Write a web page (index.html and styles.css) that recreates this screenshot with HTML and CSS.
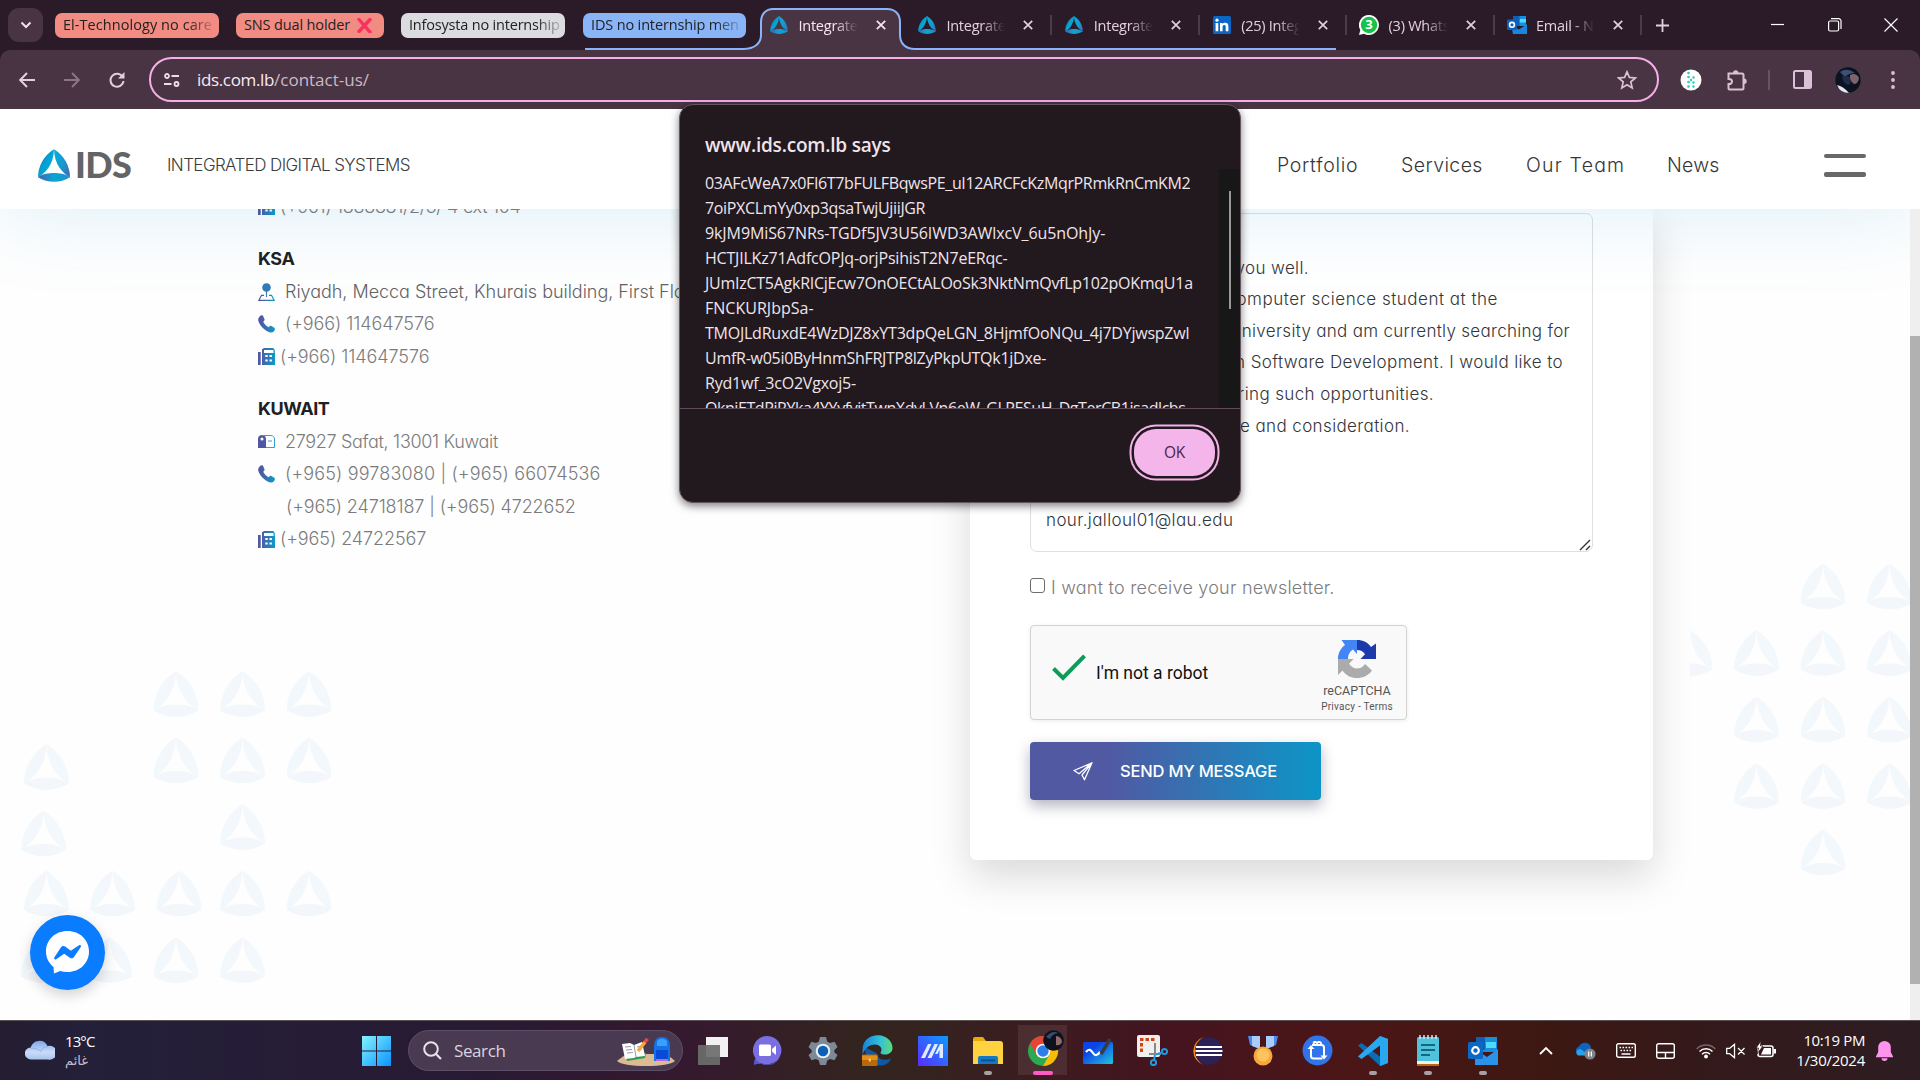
FILE: index.html
```html
<!DOCTYPE html>
<html lang="en">
<head>
<meta charset="utf-8">
<title>Integrated Digital Systems - Contact us</title>
<link rel="stylesheet" href="styles.css">
</head>
<body>
<svg class="defs" width="0" height="0" aria-hidden="true">
  <defs>
    <linearGradient id="gBrand" x1="0" x2="1"><stop offset="0.15" stop-color="#5157a3"/><stop offset="1" stop-color="#0b9bc9"/></linearGradient>
    <linearGradient id="gPetal" x1="0" x2="1" y1="0" y2="1"><stop offset="0" stop-color="#3c5fae"/><stop offset=".5" stop-color="#00a5d3"/><stop offset="1" stop-color="#00b0dc"/></linearGradient>
    <linearGradient id="gPetal2" x1="0" x2="1" y1="0" y2="1"><stop offset="0" stop-color="#00b0dc"/><stop offset=".55" stop-color="#1898cf"/><stop offset="1" stop-color="#4a62b0"/></linearGradient>
    <linearGradient id="gLens" x1="0" x2="1"><stop offset="0" stop-color="#4a5fb0"/><stop offset=".5" stop-color="#0aa5d4"/><stop offset="1" stop-color="#1f8fc9"/></linearGradient>
    <linearGradient id="gWin" x1="0" x2="1" y1="0" y2="1"><stop offset="0" stop-color="#84f2ff"/><stop offset="1" stop-color="#0a93ff"/></linearGradient>
    <linearGradient id="gFaintL" x1="0" x2="1"><stop offset="0" stop-color="#f1f9fd"/><stop offset="1" stop-color="#f4f6fa"/></linearGradient>
    <symbol id="ids" viewBox="0 0 45 46">
      <path fill="url(#gPetal)" d="M22.5 0C8 9 0 24 0 39.500C10 34 22 22 22.500 0Z"/>
      <path fill="url(#gPetal2)" d="M22.500 0C37 9 45 24 45 39.500C35 34 23 22 22.500 0Z"/>
      <path fill="url(#gLens)" d="M0 39.500C7 34.500 15 33.500 22.500 33.500S38 34.500 45 39.500C31 48 14 48 0 39.500Z"/>
    </symbol>
    <symbol id="mark" viewBox="0 0 45 46">
      <path fill="url(#gFaintL)" d="M22.5 0C8 9 0 24 0 39.500C10 34 22 22 22.500 0Z"/>
      <path fill="#f3f8fc" d="M22.500 0C37 9 45 24 45 39.500C35 34 23 22 22.500 0Z"/>
      <path fill="#f3f7fb" d="M0 39.500C7 34.500 15 33.500 22.500 33.500S38 34.500 45 39.500C31 48 14 48 0 39.500Z"/>
    </symbol>
    <symbol id="x" viewBox="0 0 10 10"><path d="M.8.8l8.400 8.400M9.200.8L.8 9.200" stroke="currentColor" stroke-width="1.700" fill="none"/></symbol>
    <symbol id="phone" viewBox="0 0 17 18"><path fill="url(#gBrand)" d="M1 2.500C2 .5 4-.4 5 .7L6.500 4.200C6.800 5 6.500 5.500 5.200 6.800C6.500 9.500 8.300 11.200 10.800 12.300C12 10.800 12.700 10.600 13.400 11L16.300 12.800C17.300 13.500 17 15 15.800 16.400C14.500 17.800 13 17.800 11 17C6 15 1.500 10.300.2 5.500C0 4.300.3 3.300 1 2.500Z"/></symbol>
    <symbol id="fax" viewBox="0 0 17 17"><path fill="url(#gBrand)" fill-rule="evenodd" d="M0 4h2.700v13H0zM4 1h1.300V0h10l1.500 2v3h-1.300V2H6v3H17v12H4zM7.300 7v2h2.400V7zm4.200 0v2h2.400V7zM7.300 11.500v2h2.400v-2zm4.200 0v2h2.400v-2z"/></symbol>
    <symbol id="pin" viewBox="0 0 17 18"><circle cx="8.500" cy="4.500" r="4.300" fill="#2f7cb8"/><path fill="none" stroke="url(#gBrand)" stroke-width="1.200" d="M6 12.300H3.500L.9 17.300h15.200L13.500 12.300H11"/><path fill="#4a78b4" d="M7.900 8h1.200v6H7.900z"/></symbol>
    <symbol id="mailbox" viewBox="0 0 17 13"><path fill="#5157a3" d="M0 4C0 1.500 1.800 0 4 0S8 1.500 8 4v9H0z"/><path fill="none" stroke="#35a0cc" d="M4 .5h9c2 0 3.500 1.500 3.500 3.500v8.500H8M10 6h4"/><circle cx="4" cy="4" r="1.500" fill="#fff"/></symbol>
  </defs>
</svg>

<div class="tabstrip">
  <svg class="tab-outline" width="760" height="50" viewBox="0 0 760 50"><path fill="#493443" d="M158 50c13 0 18-7 18-14V22c0-8 5-13 12-13h114c8 0 13 5 13 13v14c0 8 5 14 15 14z"/><path fill="none" stroke="#8ab4f8" stroke-width="2" d="M0 49h158c12 0 18-6 18-14V22c0-8 5-13 12-13h114c8 0 13 5 13 13v13c0 8 5 14 15 14h421"/></svg>
  <div class="tabsearch"><svg width="12" height="8" viewBox="0 0 12 8"><path d="M1.500 1.500L6 6l4.500-4.500" fill="none" stroke="#f3dfee" stroke-width="2"/></svg></div>
  <div class="group red g1"><span class="fade">El-Technology no care</span></div>
  <div class="group red g2"><span>SNS dual holder</span><svg width="15" height="15" viewBox="0 0 15 15"><path d="M2 1.500L13 14M13 1.500L2 13.500" stroke="#f8315e" stroke-width="3.400" stroke-linecap="round"/></svg></div>
  <div class="group gray g3"><span class="fade">Infosysta no internship</span></div>
  <div class="group blue g4"><span class="fade">IDS no internship men</span></div>
  <div class="tabs">
    <div class="tab on"><svg class="fav" width="18" height="18"><use href="#ids"/></svg><span class="ttl">Integrated</span><svg class="cls" width="10" height="10"><use href="#x"/></svg></div>
    <div class="tab sep"><svg class="fav" width="18" height="18"><use href="#ids"/></svg><span class="ttl">Integrated</span><svg class="cls" width="10" height="10"><use href="#x"/></svg></div>
    <div class="tab sep"><svg class="fav" width="18" height="18"><use href="#ids"/></svg><span class="ttl">Integrated</span><svg class="cls" width="10" height="10"><use href="#x"/></svg></div>
    <div class="tab sep"><svg class="fav" width="18" height="18" viewBox="0 0 18 18"><rect width="18" height="18" rx="1.500" fill="#0a66c2"/><path fill="#fff" d="M2.600 7h2.700v8.300H2.600zM7 7h2.500v1.200c.5-.9 1.400-1.400 2.700-1.400 2.600 0 3.200 1.600 3.200 4v4.500h-2.700v-4c0-1.200-.1-2.200-1.400-2.200S9.600 10 9.600 11.200v4.100H7z"/><circle cx="4" cy="4.200" r="1.600" fill="#fff"/></svg><span class="ttl">(25) Integ</span><svg class="cls" width="10" height="10"><use href="#x"/></svg></div>
    <div class="tab sep"><span class="wa"><svg width="20" height="20" viewBox="0 0 20 20"><path fill="#fff" d="M10 0a10 10 0 1 1-5 18.700L0 20l1.300-5A10 10 0 0 1 10 0z"/><circle cx="10" cy="10" r="8.200" fill="#17c14b"/></svg><b>3</b></span><span class="ttl">(3) Whats</span><svg class="cls" width="10" height="10"><use href="#x"/></svg></div>
    <div class="tab sep"><svg class="fav ol" width="20" height="18" viewBox="0 0 20 18"><path fill="#1490df" d="M6 0h13v10H6z"/><path fill="#50d9ff" d="M12.500 3H19v3.500h-6.500z"/><path fill="#0f5fb5" d="M6 0h6.500v10H6z"/><path fill="#1b86dd" d="M4 9l8 4.500L20 8v10H6z"/><rect y="3.500" width="10" height="10.500" rx="1" fill="#0a62c0"/><circle cx="5" cy="8.800" r="2.400" fill="none" stroke="#fff" stroke-width="1.600"/></svg><span class="ttl">Email - No</span><svg class="cls" width="10" height="10"><use href="#x"/></svg></div>
  </div>
  <svg class="plus" width="13" height="13" viewBox="0 0 13 13"><path d="M6.500 0v13M0 6.500h13" stroke="#e4cfe0" stroke-width="1.800"/></svg>
  <div class="wincontrols">
    <svg width="14" height="14" viewBox="0 0 14 14"><path d="M0 6.500h13" stroke="#fff" stroke-width="1.200"/></svg>
    <svg width="14" height="14" viewBox="0 0 14 14"><rect x=".6" y="3" width="10" height="10" rx="1.500" fill="none" stroke="#fff" stroke-width="1.200"/><path d="M3 .7h7.500a2.500 2.500 0 0 1 2.500 2.500V11" fill="none" stroke="#fff" stroke-width="1.200"/></svg>
    <svg width="14" height="14" viewBox="0 0 14 14"><path d="M.5.5l13 13M13.500.5l-13 13" stroke="#fff" stroke-width="1.200"/></svg>
  </div>
</div>

<div class="toolbar-wrap"><div class="toolbar">
  <div class="nav">
    <svg width="16" height="16" viewBox="0 0 16 16"><path d="M8 1L1.200 8 8 15M1.500 8H16" fill="none" stroke="#e4cfe0" stroke-width="2"/></svg>
    <svg width="16" height="16" viewBox="0 0 16 16"><path d="M8 1l6.800 7L8 15M14.500 8H0" fill="none" stroke="#8c7585" stroke-width="2"/></svg>
    <svg width="16" height="16" viewBox="0 0 16 16"><path d="M13.700 5A6.500 6.500 0 1 0 14.500 9" fill="none" stroke="#e4cfe0" stroke-width="2"/><path d="M15.500 0v6.500H9z" fill="#e4cfe0"/></svg>
  </div>
  <div class="omnibox">
    <svg width="16" height="14" viewBox="0 0 16 14"><g fill="none" stroke="#eedcea" stroke-width="1.800"><circle cx="3" cy="3" r="2"/><path d="M7.500 3H15M0 11h7.500"/><circle cx="12.500" cy="11" r="2"/></g></svg>
    <p class="url"><span>ids.com.lb</span>/contact-us/</p>
    <svg class="star" width="20" height="20" viewBox="0 0 20 20"><path d="M10 1.800l2.400 5.600 6 .5-4.600 4 1.400 6L10 14.700 4.800 17.900l1.400-6-4.600-4 6-.5z" fill="none" stroke="#d9c3d4" stroke-width="1.700"/></svg>
  </div>
  <div class="ext">
    <svg width="22" height="22" viewBox="0 0 22 22"><circle cx="11" cy="11" r="10.500" fill="#fff"/><g fill="#2fc9b5"><circle cx="8.500" cy="4" r="1.300"/><circle cx="8.500" cy="8" r="1.300"/><circle cx="8.500" cy="13" r="1.300"/><circle cx="8.500" cy="17.500" r="1.300"/><circle cx="13.500" cy="8.500" r="1.200"/><circle cx="11" cy="11" r="1.200"/><circle cx="13.500" cy="13.500" r="1.200"/><circle cx="13.500" cy="17.500" r="1.200"/></g></svg>
    <svg width="22" height="22" viewBox="0 0 22 22"><path d="M2.500 4.500H16a1.500 1.500 0 0 1 1.500 1.500v13.500a1 1 0 0 1-1 1H3.500a1 1 0 0 1-1-1V15c2.500.2 3.500-1 3.500-2.500S5 9.800 2.500 10z" fill="none" stroke="#dcbfd8" stroke-width="2"/><path d="M7 4a2.700 2.700 0 0 1 5.400 0zM18 9.500a2.700 2.700 0 0 1 0 5.400z" fill="#dcbfd8"/></svg>
    <i></i>
    <svg width="19" height="19" viewBox="0 0 19 19"><rect x="1" y="1" width="17" height="17" rx="1.500" fill="none" stroke="#dcbfd8" stroke-width="2"/><path d="M11 1h7v17h-7z" fill="#dcbfd8"/></svg>
    <svg width="26" height="26" viewBox="0 0 26 26"><circle cx="13" cy="13" r="12.700" fill="#0c1220"/><path d="M2 18q6 1 12 8Q5 26 2 18z" fill="#dfe6f2"/><path d="M5 5q7-5 15 1-6 0-10 4z" fill="#3c5274"/><path d="M15 8q6-3 9 3-1 6-5 6-5-3-4-9z" fill="#7d6468"/><path d="M7 10q5-3 8 1 2 6-2 7-5-2-6-8z" fill="#1f2c49"/></svg>
    <svg width="4" height="18" viewBox="0 0 4 18"><g fill="#dcbfd8"><circle cx="2" cy="2" r="1.900"/><circle cx="2" cy="9" r="1.900"/><circle cx="2" cy="16" r="1.900"/></g></svg>
  </div>
</div></div>

<div class="page">
  <header class="site-header">
    <svg class="logo" width="32" height="33"><use href="#ids"/></svg>
    <span class="brand">IDS</span>
    <span class="tagline">INTEGRATED DIGITAL SYSTEMS</span>
    <nav><a class="n1">Portfolio</a><a class="n2">Services</a><a class="n3">Our Team</a><a class="n4">News</a></nav>
    <div class="burger"><i></i><i></i></div>
  </header>
  <main>
    <svg class="deco" width="1910" height="811" viewBox="0 209 1910 811">
      <g>
        <use href="#mark" x="153.500" y="671" width="45" height="46"/><use href="#mark" x="220" y="671" width="45" height="46"/><use href="#mark" x="286.500" y="671" width="45" height="46"/>
        <use href="#mark" x="24" y="744" width="45" height="46"/><use href="#mark" x="153.500" y="737.500" width="45" height="46"/><use href="#mark" x="220" y="737.500" width="45" height="46"/><use href="#mark" x="286.500" y="737.500" width="45" height="46"/>
        <use href="#mark" x="21" y="810.500" width="45" height="46"/><use href="#mark" x="220" y="804" width="45" height="46"/>
        <use href="#mark" x="24" y="870.500" width="45" height="46"/><use href="#mark" x="90" y="870.500" width="45" height="46"/><use href="#mark" x="156.500" y="870.500" width="45" height="46"/><use href="#mark" x="220" y="870.500" width="45" height="46"/><use href="#mark" x="286.500" y="870.500" width="45" height="46"/>
        <use href="#mark" x="21" y="937" width="45" height="46"/><use href="#mark" x="87" y="937" width="45" height="46"/><use href="#mark" x="153.500" y="937" width="45" height="46"/><use href="#mark" x="220" y="937" width="45" height="46"/>
      </g>
      <clipPath id="rc"><path d="M1690 500h220v400h-220z"/></clipPath>
      <g clip-path="url(#rc)">
        <use href="#mark" x="1800.500" y="563.500" width="45" height="46"/><use href="#mark" x="1867" y="563.500" width="45" height="46"/>
        <use href="#mark" x="1667.500" y="630" width="45" height="46"/><use href="#mark" x="1734" y="630" width="45" height="46"/><use href="#mark" x="1800.500" y="630" width="45" height="46"/><use href="#mark" x="1867" y="630" width="45" height="46"/>
        <use href="#mark" x="1734" y="696.500" width="45" height="46"/><use href="#mark" x="1800.500" y="696.500" width="45" height="46"/><use href="#mark" x="1867" y="696.500" width="45" height="46"/>
        <use href="#mark" x="1734" y="763" width="45" height="46"/><use href="#mark" x="1800.500" y="763" width="45" height="46"/><use href="#mark" x="1867" y="763" width="45" height="46"/>
        <use href="#mark" x="1800.500" y="829.500" width="45" height="46"/>
      </g>
    </svg>
    <section class="contacts">
      <div class="office">
        <p class="faxrow"><svg width="17" height="17"><use href="#fax"/></svg><span class="c1">(+961) 1888881/2/3/ 4 ext 104</span></p>
      </div>
      <div class="office">
        <h3>KSA</h3>
        <p class="dark"><svg width="17" height="18"><use href="#pin"/></svg><span class="c2">Riyadh, Mecca Street, Khurais building, First Floor</span></p>
        <p><svg width="17" height="18"><use href="#phone"/></svg><span>(+966) 114647576</span></p>
        <p class="faxrow"><svg width="17" height="17"><use href="#fax"/></svg><span>(+966) 114647576</span></p>
      </div>
      <div class="office">
        <h3>KUWAIT</h3>
        <p><svg width="17" height="13"><use href="#mailbox"/></svg><span class="c3">27927 Safat, 13001 Kuwait</span></p>
        <p><svg width="17" height="18"><use href="#phone"/></svg><span class="c4">(+965) 99783080 | (+965) 66074536</span></p>
        <p class="cont"><span class="c5">(+965) 24718187 | (+965) 4722652</span></p>
        <p class="faxrow"><svg width="17" height="17"><use href="#fax"/></svg><span>(+965) 24722567</span></p>
      </div>
    </section>
    <section class="card">
      <div class="message">
        <p></p>
        <p class="m2">finds you well.</p>
        <p class="m3">a computer science student at the</p>
        <p class="m4">University and am currently searching for</p>
        <p class="m5">in Software Development. I would like to</p>
        <p class="m6">offering such opportunities.</p>
        <p class="m7">time and consideration.</p>
        <p></p>
        <p></p>
        <p>nour.jalloul01@lau.edu</p>
        <svg class="grip" width="12" height="12" viewBox="0 0 12 12"><path d="M1 11L11 1M7 11l4-4" stroke="#333" stroke-width="1.400"/></svg>
      </div>
      <label class="news"><i></i><span>I want to receive your newsletter.</span></label>
      <div class="captcha">
        <svg class="tick" width="34" height="27" viewBox="0 0 34 27"><path d="M1.500 14.500L11 24 32.500 1.800" fill="none" stroke="#0b9d58" stroke-width="4"/></svg>
        <span class="robot">I'm not a robot</span>
        <div class="rc">
          <svg width="38" height="38" viewBox="0 0 38 38"><path fill="#1c3aa9" d="M19 0C25 0 30 2.500 33 7L38 3.500V19H22.500L27 14.300C25.500 11.500 22.500 10 19 10z"/><path fill="#4285f4" d="M19 0v14l-4-4.500C12 11 10 14.500 10 19H0C0 13 2.500 8.500 7 5L3.500 0z"/><path fill="#ababab" d="M0 19h15.500L11 23.800C13 27 16 28.500 19 28.500 22 28.500 25 27 27 24l7 6.500C30.500 35.500 25 38 19 38 13 38 8 35.500 4.500 30.500L0 35z"/></svg>
          <b>reCAPTCHA</b><small>Privacy - Terms</small>
        </div>
      </div>
      <div class="send"><svg width="20" height="19" viewBox="0 0 20 19"><path d="M19 .8L1 8.500l5 3.300L19 .8l-7.500 17L9 13zM9 13L19 .8" fill="none" stroke="#fff" stroke-width="1.300" stroke-linejoin="round"/></svg><span>SEND MY MESSAGE</span></div>
    </section>
  </main>
  <div class="scrollbar"><i></i></div>
  <div class="messenger"><svg width="43" height="43" viewBox="0 0 43 43"><path fill="#fff" d="M21.500 0C9 0 0 9 0 20.500c0 6.500 2.800 11.500 7.500 15.500L8 42.500 14 40c2.400.7 5 1 7.500 1C34 41 43 32 43 20.500S34 0 21.500 0z"/><path fill="#0a7cff" d="M8.300 26.500L15 16.200c1-1.400 2.800-1.700 4.200-.7l5.600 4.200 8.200-5.500c1.200-.8 2.600.4 1.800 1.700L28 26c-1 1.400-2.800 1.700-4.200.7l-5.600-4-8 5.500c-1.200.8-2.700-.4-1.900-1.700z"/></svg></div>
</div>

<div class="dialog">
  <h2>www.ids.com.lb says</h2>
  <div class="dialog-body">
    <div class="token">
      <p class="k1">03AFcWeA7x0FI6T7bFULFBqwsPE_uI12ARCFcKzMqrPRmkRnCmKM2</p>
      <p class="k2">7oiPXCLmYy0xp3qsaTwjUjiiJGR</p>
      <p class="k3">9kJM9MiS67NRs-TGDf5JV3U56IWD3AWlxcV_6u5nOhJy-</p>
      <p class="k4">HCTJILKz71AdfcOPJq-orjPsihisT2N7eERqc-</p>
      <p class="k5">JUmIzCT5AgkRICjEcw7OnOECtALOoSk3NktNmQvfLp102pOKmqU1a</p>
      <p class="k6">FNCKURJbpSa-</p>
      <p class="k7">TMOJLdRuxdE4WzDJZ8xYT3dpQeLGN_8HjmfOoNQu_4j7DYjwspZwl</p>
      <p class="k8">UmfR-w05i0ByHnmShFRJTP8lZyPkpUTQk1jDxe-</p>
      <p class="k9">Ryd1wf_3cO2Vgxoj5-</p>
      <p class="k10">QkniETdPiRYka4YYvfvitTwnXdyLVn6eW_GLPESuH_DgTerCB1isadlcbs</p>
    </div>
    <div class="track"><i></i></div>
  </div>
  <div class="dialog-foot"><div class="ok">OK</div></div>
</div>

<div class="taskbar">
  <div class="weather">
    <svg width="30" height="20" viewBox="0 0 30 20"><defs><linearGradient id="gc" x1="0" x2="0" y1="0" y2="1"><stop offset="0" stop-color="#7fa6ea"/><stop offset=".6" stop-color="#c9dcf7"/><stop offset="1" stop-color="#a9c3ef"/></linearGradient></defs><path fill="url(#gc)" d="M6 19.500a6 6 0 0 1-.3-12A9 9 0 0 1 22.500 6 7 7 0 1 1 23 19.500z"/><path fill="none" stroke="#8eb0ea" d="M6 8.500c4-1 8 1 9.500 3 1.500-3 4-5 7.500-5"/></svg>
    <div><span>13°C</span><span class="ar">غائم</span></div>
  </div>
  <svg class="start" width="29" height="30" viewBox="0 0 29 30"><path fill="url(#gWin)" d="M0 0h14v14.400H0zM15 0h14v14.400H15zM0 15.600h14V30H0zM15 15.600h14V30H15z"/></svg>
  <div class="search">
    <svg width="19" height="19" viewBox="0 0 19 19"><circle cx="8" cy="8" r="6.800" fill="none" stroke="#e8e0ea" stroke-width="2"/><path d="M13 13l5 5" stroke="#e8e0ea" stroke-width="2.200"/></svg>
    <span>Search</span>
    <svg class="art" width="58" height="31" viewBox="0 0 58 31"><path fill="#dcbb94" d="M0 26q7-6 12-7h30q11 1 16 7-6 5-29 5T0 26z"/><path fill="#2f9a4c" d="M7 14l3 12 18-3 1-5z"/><path fill="#fff" d="M5 9l8-1 4 2 8-3 3 14-9 1-2 1-9 1z"/><path stroke="#99a" fill="none" d="M17 10l2 12M8 12l6-.5M9 15l6-.5M10 18l6-.5M20 12l4-1M21 15l4-1"/><path stroke="#f7a83a" stroke-width="3.500" d="M21 16l7-9"/><path stroke="#e5484d" stroke-width="3.500" d="M28 7l2.500-3.200"/><path fill="#1473e6" d="M37 12c0-7 3-10 8-10s8 3 8 10v14H37z"/><path fill="#39a0ff" d="M40 6q5-5 10 0v5H40z"/><path fill="#0b49d8" d="M39 15h12v9H39z"/><path fill="#b06be0" d="M39 24h12v2H39z"/></svg>
  </div>
  <div class="apps">
    <div class="app"><svg width="30" height="28" viewBox="0 0 30 28"><path fill="#f1f1f1" d="M8 0h22v20H8z"/><path fill="#6d6d6d" fill-opacity=".92" d="M0 8h22v20H0z"/></svg></div>
    <div class="app"><svg width="29" height="29" viewBox="0 0 29 29"><path fill="#7a6fe0" d="M14.500 0a14.200 14.200 0 1 1-6 27.200L.8 28.500l1.600-6.300A14.300 14.300 0 0 1 14.500 0z"/><path fill="#5a55cc" d="M2 22a14 14 0 0 0 26-4A14 14 0 0 1 8.500 27.200L.8 28.500z"/><rect x="6" y="8.500" width="12" height="11.500" rx="1.500" fill="#fff"/><path fill="#fff" d="M19 13l4-3.500v9.500l-4-3.500z"/></svg></div>
    <div class="app"><svg width="30" height="30" viewBox="0 0 30 30"><path fill="#7d8a96" d="M12 1h6l1.200 4.500L22 7l4.500-1.200 3 5.200-3.200 3.200v2L29.500 19l-3 5.200L22 23l-2.800 1.500L18 29h-6l-1.200-4.500L8 23l-4.500 1.200L.5 19l3.200-2.800v-2L.5 11l3-5.200L8 7l2.800-1.500z"/><circle cx="15" cy="15" r="7.300" fill="#e9eef3"/><circle cx="15" cy="15" r="5.200" fill="#0c61b4"/></svg></div>
    <div class="app"><svg width="31" height="31" viewBox="0 0 31 31"><defs><linearGradient id="ge" x1="0" x2="1"><stop offset="0" stop-color="#1583d8"/><stop offset=".6" stop-color="#35c1d8"/><stop offset="1" stop-color="#5fdc74"/></linearGradient></defs><path fill="#0c59a4" d="M3 12C2 24 12 31 20 30.500c5-.5 8-4 9-7-8 3-14 0-14-5z"/><path fill="url(#ge)" d="M.5 15C.5 6 7 .3 16 .3S31 7 30.500 13.500c-.3 4.500-5 6.500-9 6-3-.5-3.500-1.500-2.500-2.800C21 13 17 9.500 13 9.500 7 9.500 3 13 .5 20z"/><rect y="19.500" width="15.500" height="11.500" rx="1" fill="#b8690c"/><path fill="#e58e19" d="M0 20.500h15.500v4.500H0z"/><path fill="#ffd34d" d="M6.800 23.500h2v3h-2z"/></svg></div>
    <div class="app"><svg width="30" height="30" viewBox="0 0 30 30"><defs><linearGradient id="gm" x1="0" x2="1" y1="1" y2="0"><stop offset="0" stop-color="#5a2bff"/><stop offset="1" stop-color="#0c9bff"/></linearGradient></defs><path fill="url(#gm)" d="M0 0h30v30H0z"/><path fill="#dfe9ff" d="M3 22L10 8h3.500L7 22zM9.500 22l7-14H20l-6.500 14zM22 8h3v14h-3.500v-8l-2 4h-2.500z"/></svg></div>
    <div class="app run"><svg width="30" height="27" viewBox="0 0 30 27"><path fill="#e8a90b" d="M0 2Q0 0 2 0h8l3 4H0z"/><path fill="#ffd23f" d="M0 4h27q3 0 3 3v20H0z"/><path fill="#1378c6" d="M5 27v-6q0-2 2-2h16q2 0 2 2v6z"/><path fill="#0b4f8a" d="M8 22.500h14v1.800H8z"/></svg></div>
    <div class="app run active"><svg width="36" height="37" viewBox="0 0 36 37"><circle cx="15" cy="21" r="15" fill="#2da94f"/><path fill="#ea4335" d="M2 13.500a15 15 0 0 1 26 0H15L8.500 25z"/><path fill="#fbbc05" d="M28 13.500A15 15 0 0 1 15 36l6.500-11.500L22 13.500z"/><circle cx="15" cy="21" r="7.300" fill="#fff"/><circle cx="15" cy="21" r="5.700" fill="#2f7de9"/><circle cx="25.500" cy="10.500" r="10.300" fill="#0e1220"/><path fill="#8f6c68" d="M28 6a6 6 0 0 1 6 6q-2 4-6 3z"/><path fill="#3a4c69" d="M18 7q6-7 12-4-6 1-8 6z"/></svg></div>
    <div class="app"><svg width="30" height="26" viewBox="0 0 30 26"><defs><linearGradient id="gb" x1="0" x2="1" y1="0" y2="1"><stop offset=".3" stop-color="#0b45e8"/><stop offset="1" stop-color="#24c5dd"/></linearGradient></defs><rect y="4" width="30" height="22" rx="1.500" fill="url(#gb)"/><path d="M3 14c3-4 5-2 7 1s4 3 7-1" stroke="#fff" stroke-width="2.200" fill="none"/><path d="M18 16L27 1" stroke="#3a3a40" stroke-width="3.500"/></svg></div>
    <div class="app"><svg width="31" height="31" viewBox="0 0 31 31"><rect width="23" height="22" rx="2" fill="#efefef"/><path d="M4.500 17V4.500H18" fill="none" stroke="#d8420e" stroke-width="3" stroke-dasharray="3.500 2"/><path d="M18 8v12M12 19h12" stroke="#888" stroke-width="2"/><circle cx="27.500" cy="16.500" r="2.600" fill="none" stroke="#1e9be0" stroke-width="2"/><circle cx="16.500" cy="27.500" r="2.600" fill="none" stroke="#1e9be0" stroke-width="2"/><path d="M17 25l1-5M25 17.500l-6 2" stroke="#1e9be0" stroke-width="2"/></svg></div>
    <div class="app"><svg width="30" height="30" viewBox="0 0 30 30"><path fill="#f28a1a" d="M11 1A14.500 14.500 0 0 0 11 29 15.500 15.500 0 0 1 11 1z"/><circle cx="16" cy="15" r="13.700" fill="#2c2255"/><path stroke="#fff" stroke-width="2" d="M3 11h26M2.500 15h27M3 19h26"/></svg></div>
    <div class="app"><svg width="30" height="30" viewBox="0 0 30 30"><path fill="#4e8be8" d="M0 0h10v12l-8-3zM30 0H20v12l8-3z"/><path fill="#a9ccfa" d="M4 0h8v13l-8-3zM18 0h8v10l-8 3z"/><circle cx="15" cy="20" r="9.500" fill="#f7a73a"/><circle cx="15" cy="19" r="6.500" fill="#fdc35c"/></svg></div>
    <div class="app"><svg width="31" height="31" viewBox="0 0 31 31"><circle cx="15.500" cy="15.500" r="15" fill="#2f74e8"/><g fill="none" stroke="#fff" stroke-width="2"><path d="M10 10h9.500q2.500 0 2.500 2.500V21M20.500 23.500h-9Q9 23.500 9 21v-8.500"/><path d="M12 9.500q-1-3 1.500-2.500l1.500 1 1.500-1Q19 6.500 19 9"/></g><path fill="#fff" d="M5.500 14l3.500-4 3.500 4zM18.500 20.500l3.500 4 3.500-4z"/></svg></div>
    <div class="app run"><svg width="30" height="30" viewBox="0 0 30 30"><path fill="#1180c8" d="M22 0l8 3v24l-8 3z"/><path fill="#0b6bb3" d="M0 9.500L3.500 7 22 20.500V30z"/><path fill="#29a8f2" d="M0 20.500L3.500 23 22 9.500V0zM22 0l8 3v24l-8 3z"/></svg></div>
    <div class="app run"><svg width="22" height="31" viewBox="0 0 22 31"><rect y="2" width="22" height="27" rx="1.500" fill="#4fc3dc"/><path fill="#f6f0e6" d="M0 26h22v3H0z"/><path fill="#b9651b" d="M0 29h22v2H0z"/><path stroke="#15667f" stroke-width="2" d="M4 10h14M4 15h14M4 20h9"/><path stroke="#cfeaf2" stroke-width="1.500" d="M3 0v4M7 0v4M11 0v4M15 0v4M19 0v4"/></svg></div>
    <div class="app run"><svg width="30" height="29" viewBox="0 0 30 29"><path fill="#1490df" d="M8 1h21v15H8z"/><path fill="#50d9ff" d="M18 6h10v6H18z"/><path fill="#0f5fb5" d="M8 1h9v13H8z"/><path fill="#2b93e8" d="M7 13l12 8 11-8v16H7z"/><rect y="6" width="15" height="17" rx="1.500" fill="#0d67c5"/><circle cx="7.500" cy="14.500" r="3.300" fill="none" stroke="#fff" stroke-width="2.200"/></svg></div>
  </div>
  <div class="tray">
    <svg class="t1" width="14" height="9" viewBox="0 0 14 9"><path d="M1 8l6-6 6 6" fill="none" stroke="#fff" stroke-width="1.800"/></svg>
    <svg class="t2" width="21" height="18" viewBox="0 0 21 18"><path fill="#0d64c0" d="M4 13a4.500 4.500 0 0 1 0-8.500A6.500 6.500 0 0 1 16 5l-3 8z"/><path fill="#28a2ea" d="M3 13.500c-3-2-1.500-7 2.500-6.500l9 6.500z"/><circle cx="15" cy="12" r="5.600" fill="#808488"/><path stroke="#fff" stroke-width="1.200" d="M13.700 9.500v5M16.300 9.500v5"/></svg>
    <svg class="t3" width="20" height="15" viewBox="0 0 20 15"><rect x=".7" y=".7" width="18.600" height="13.600" rx="1.800" fill="none" stroke="#fff" stroke-width="1.400"/><path stroke="#fff" stroke-width="1.600" stroke-dasharray="1.600 1.400" d="M3.500 4.500h13.500M4.500 7.500h12"/><path stroke="#fff" stroke-width="1.500" d="M5.500 11h9"/></svg>
    <svg class="t4" width="19" height="16" viewBox="0 0 19 16"><rect x=".7" y=".7" width="17.600" height="14.600" rx="2" fill="none" stroke="#fff" stroke-width="1.400"/><path stroke="#fff" stroke-width="1.400" d="M1 9.500h17M9.500 9.500V15"/></svg>
    <svg class="t5" width="20" height="16" viewBox="0 0 20 16"><g fill="none" stroke="#fff" stroke-width="1.500"><path stroke="#7c6462" d="M.7 6A13 13 0 0 1 19.300 6"/><path d="M3.500 8.500a9.200 9.200 0 0 1 13 0M6 11.200a5.700 5.700 0 0 1 8 0"/></g><circle cx="10" cy="13.500" r="1.900" fill="#fff"/></svg>
    <svg class="t6" width="20" height="16" viewBox="0 0 20 16"><g fill="none" stroke="#fff" stroke-width="1.300"><path d="M.7 5.300h3L8.500 1.300v13.400L3.700 10.700h-3zM12 5l6.500 6.500M18.500 5L12 11.500"/></g></svg>
    <svg class="t7" width="20" height="17" viewBox="0 0 20 17"><rect x="2" y="5" width="15" height="10.500" rx="2" fill="none" stroke="#fff" stroke-width="1.500"/><path fill="#fff" d="M8 7h7v6.500H5zM17.500 8H20v4.500h-2.500z"/><path fill="#fff" stroke="#35191a" stroke-width=".8" d="M5 0L0 7h2.500L1 13l6-8H4.500z"/></svg>
    <div class="clock"><span class="tm">10:19 PM</span><span class="dt">1/30/2024</span></div>
    <svg class="bell" width="17" height="20" viewBox="0 0 17 20"><path fill="#ff94ee" d="M8.500 0a6.300 6.300 0 0 1 6.300 6.300v4.700L17 15.500v.8H0v-.8L2.200 11V6.300A6.300 6.300 0 0 1 8.500 0zM5.500 17.300h6a3 2.700 0 0 1-6 0z"/></svg>
  </div>
</div>
</body>
</html>
```
FILE: styles.css
```css
* { box-sizing: border-box; margin: 0; padding: 0; }
body {
  width: 1920px; height: 1080px; overflow: hidden;
  display: flex; flex-direction: column; position: relative;
  font-family: "Open Sans", "Noto Sans", sans-serif;
  background: #fff;
}
svg { display: block; flex: none; }
.defs { position: absolute; }
i { display: block; font-style: normal; }
span, p, a, h2, h3, b, small { white-space: pre; }

/* tab strip */
.tabstrip { height: 50px; flex: none; background: #2b1a28; display: flex; align-items: flex-start; position: relative; padding-left: 8px; }
.tab-outline { position: absolute; left: 585px; top: 0; z-index: 0; }
.tabsearch { width: 35px; height: 34px; margin-top: 8px; border-radius: 11px; background: #493443; display: flex; align-items: center; justify-content: center; }
.group { height: 25px; margin-top: 13px; border-radius: 7px; padding: 0 0 0 8px; font-size: 14.500px; line-height: 23px; color: #222; display: flex; align-items: center; }
.group span { height: 25px; }
.fade { mask-image: linear-gradient(90deg, #000 84%, rgba(0, 0, 0, .2) 100%); }
.red { background: #f28b82; }
.gray { background: #dadce0; }
.blue { background: #8ab4f8; }
.g1 { width: 164px; margin-left: 12px; letter-spacing: .06px; }
.g2 { width: 148px; margin-left: 17px; letter-spacing: -.14px; gap: 7px; }
.g3 { width: 164px; margin-left: 17px; letter-spacing: -.19px; }
.g4 { width: 163px; margin-left: 18px; letter-spacing: -.15px; }
.tabs { display: flex; margin-left: 15px; position: relative; }
.tab { width: 147.400px; height: 50px; padding-left: 9.500px; display: flex; align-items: center; position: relative; color: #e4cfe0; }
.tab.on { padding-left: 9px; color: #f6e6f2; }
.tab.sep { background: linear-gradient(#4d3a49, #4d3a49) no-repeat 142px 15px / 2px 20px; }
.fav { width: 18px; }
.ttl { width: 60px; margin-left: 10.500px; overflow: hidden; font-size: 14.500px; letter-spacing: -.25px; mask-image: linear-gradient(90deg, #000 60%, transparent 98%); }
.cls { margin-left: 17px; }
.wa { position: relative; margin: 0 -1px; }
.wa b { position: absolute; left: 0; top: 0; width: 20px; text-align: center; font-size: 13px; line-height: 19px; color: #fff; }
.fav.ol { width: 20px; margin-right: -2px; }
.plus { margin: 18.500px 0 0 11px; }
.wincontrols { display: flex; gap: 42.500px; margin: 18px 22px 0 auto; }

/* toolbar */
.toolbar-wrap { height: 59px; flex: none; background: #2b1a28; }
.toolbar { height: 59px; background: #493443; border-radius: 10px 10px 0 0; display: flex; align-items: center; padding-left: 19px; }
.nav { display: flex; gap: 29px; width: 130px; }
.omnibox { width: 1510px; height: 45px; border: 2px solid #f5aee8; border-radius: 23px; display: flex; align-items: center; padding-left: 13px; }
.url { font-size: 17px; margin-left: 17px; color: #cdb9c8; padding-bottom: 1px; }
.url span { color: #f8eaf5; letter-spacing: -.35px; }
.star { margin-left: auto; margin-right: 20px; }
.ext { display: flex; align-items: center; flex: 1; padding-left: 21px; }
.ext > :nth-child(2) { margin-left: 24px; }
.ext i { width: 2px; height: 20px; margin-left: 20px; background: #6a5264; }
.ext > :nth-child(4) { margin-left: 23px; }
.ext > :nth-child(5) { margin-left: 23px; }
.ext > :nth-child(6) { margin-left: 30px; }

/* web page */
.page { height: 911px; flex: none; position: relative; overflow: hidden; background: #fefefe; font-family: Inter, "Noto Sans", sans-serif; font-feature-settings: "cv11"; }
.site-header { height: 100px; background: #fff; display: flex; align-items: center; padding-left: 38px; position: relative; z-index: 3; box-shadow: 0 0 90px rgba(0, 140, 200, .15); padding-top: 12px; }
.brand { font-family: Lato, sans-serif; font-weight: 900; font-size: 36px; letter-spacing: -.6px; color: #636466; margin-left: 5px; width: 92px; line-height: 36px; margin-top: -2px; }
.tagline { font-weight: 300; font-size: 17px; letter-spacing: -.6px; color: #3c3c3e; width: 1110px; margin-top: -1px; }
nav { display: flex; width: 547px; font-size: 19.500px; color: #363638; margin-top: -1px; }
nav a { font-weight: 350; }
.n1 { width: 124px; letter-spacing: .7px; }
.n2 { width: 125px; letter-spacing: .4px; }
.n3 { width: 141px; letter-spacing: 1.200px; }
.n4 { letter-spacing: .2px; }
.burger { width: 42px; }
.burger i { height: 4px; border-radius: 2px; background: #68686a; }
.burger i + i { height: 5px; margin-top: 14px; }
main { display: flex; height: 811px; position: relative; padding-left: 258px; }
.deco { position: absolute; left: 0; top: 0; }
.contacts { width: 712px; margin-top: -18.500px; position: relative; }
.office { margin-bottom: 20px; font-size: 18px; line-height: 32.500px; font-weight: 350; letter-spacing: -.08px; color: #7b7b7d; }
.office h3 { font-size: 18px; font-weight: 700; letter-spacing: -.45px; color: #1f2024; height: 32.500px; }
.office p { display: flex; align-items: center; height: 32.500px; gap: 10px; }
.office p.dark { color: #636365; }
.office p.faxrow { gap: 5px; }
.office p.cont { padding-left: 28px; }
.office .c1 { letter-spacing: -.3px; }
.office .c2 { letter-spacing: -.03px; }
.office .c3 { letter-spacing: -.32px; }
.office .c4 { letter-spacing: .15px; }
.office .c5 { letter-spacing: -.12px; }
.card { width: 683px; height: 651px; background: #fff; border-radius: 0 0 6px 6px; box-shadow: 0 16px 40px rgba(0, 0, 0, .15); padding: 4px 60px 0; position: relative; }
.message { height: 339px; border: 1px solid #dde0e3; border-radius: 7px; padding: 7px 15px; font-size: 17px; line-height: 31.600px; font-weight: 350; letter-spacing: .38px; color: #33363a; position: relative; }
.message p { height: 31.600px; }
.m2 { width: 263px; }
.m3 { width: 452px; }
.m4 { width: 524px; }
.m5 { width: 517px; }
.m6 { width: 388px; }
.m7 { width: 364px; }
.m2, .m3, .m4, .m5, .m6, .m7 { display: flex; justify-content: flex-end; }
.m3 { letter-spacing: .52px; }
.m4 { letter-spacing: .3px; }
.grip { position: absolute; right: 1px; bottom: 0; }
.news { display: flex; height: 32px; margin-top: 20px; gap: 6px; font-size: 18px; line-height: 32px; font-weight: 350; letter-spacing: .22px; color: #7c7c7e; }
.news i { width: 15px; height: 15px; margin-top: 6px; border: 1px solid #6d6d6d; border-radius: 3px; }
.captcha { width: 377px; height: 95px; margin-top: 21px; border: 1px solid #d3d3d3; border-radius: 4px; background: #f9f9f9; box-shadow: 0 1px 4px rgba(0, 0, 0, .08); display: flex; font-family: Roboto, sans-serif; padding-left: 21px; }
.tick { margin-top: 28px; }
.robot { font-size: 17.500px; line-height: 20px; color: #111; margin: 37px 0 0 10px; }
.rc { margin: 14px 14px 0 auto; width: 70px; display: flex; flex-direction: column; align-items: center; color: #555; }
.rc b { font-weight: 400; font-size: 12.500px; line-height: 15px; margin-top: 5px; }
.rc small { font-size: 10px; line-height: 12px; letter-spacing: .25px; margin-top: 3px; }
.send { width: 291px; height: 58px; margin-top: 22px; border-radius: 4px; background: linear-gradient(90deg, #5159a3 27%, #0f93c6 97%); box-shadow: 0 6px 14px rgba(40, 40, 80, .35); display: flex; align-items: center; padding-left: 43px; gap: 27px; color: #fff; font-size: 16.500px; font-weight: 500; letter-spacing: -.2px; }
.scrollbar { position: absolute; right: 0; top: 100px; width: 10px; height: 811px; background: #efefef; z-index: 4; }
.scrollbar i { height: 648px; margin-top: 127px; background: #b1b1b1; }
.messenger { position: absolute; left: 30px; top: 806px; width: 75px; height: 75px; border-radius: 50%; background: #0a7cff; box-shadow: 0 5px 14px rgba(0, 0, 0, .18); display: flex; align-items: center; justify-content: center; }

/* alert */
.dialog { position: absolute; z-index: 10; left: 679px; top: 104px; width: 562px; height: 399px; border-radius: 14px; border: 1px solid #66545f; background: #21191e; box-shadow: 0 3px 8px rgba(0, 0, 0, .5); display: flex; flex-direction: column; color: #f0e4ec; }
.dialog h2 { font-size: 19px; font-weight: 600; letter-spacing: -.2px; line-height: 26px; padding: 27px 0 0 25px; height: 64px; }
.dialog-body { height: 240px; display: flex; justify-content: space-between; overflow: hidden; padding-left: 25px; border-bottom: 1px solid #5f4a58; }
.token { font-size: 16px; line-height: 25px; padding-top: 1.500px; }
.k1 { letter-spacing: -.35px; }
.k2 { letter-spacing: -.346px; }
.k3 { letter-spacing: -.09px; }
.k4 { letter-spacing: -.2px; }
.k5 { letter-spacing: -.26px; }
.k6 { letter-spacing: .018px; }
.k7 { letter-spacing: -.235px; }
.k8 { letter-spacing: -.275px; }
.k9 { letter-spacing: -.2px; }
.k10 { letter-spacing: -.43px; }
.track { width: 21px; background: #181718; }
.track i { width: 2px; height: 118px; margin: 22px 0 0 10px; background: #9a9a9a; }
.dialog-foot { flex: 1; display: flex; justify-content: flex-end; padding: 20px 25px 0 0; }
.ok { width: 81px; height: 47px; border-radius: 22px; background: #f4b5ea; box-shadow: 0 0 0 2.500px #21191e, 0 0 0 4.500px #f5b0e8; color: #4c2442; font-size: 15.500px; line-height: 46px; text-align: center; letter-spacing: -.2px; }

/* taskbar */
.taskbar { height: 60px; flex: none; border-top: 1px solid #5b5155; display: flex; align-items: center; color: #fff; background: linear-gradient(90deg, #251d30 0, #24203a 80px, #281a33 480px, #35192f 680px, #33241f 860px, #35221f 940px, #45141f 1170px, #4b1616 1370px, #3e1812 1530px, #34191a 1700px, #2d1d22 1920px); position: relative; }
.weather { display: flex; align-items: flex-start; width: 362px; padding: 0 0 0 25px; gap: 10px; }
.weather svg { margin-top: 9px; }
.weather span { display: block; font-size: 15px; line-height: 20px; letter-spacing: -.9px; }
.weather .ar { font-family: "DejaVu Sans", sans-serif; font-size: 13px; letter-spacing: 0; color: #c5bfca; direction: rtl; text-align: left; }
.search { width: 275px; height: 41px; margin-left: 17px; border-radius: 21px; background: #493a52; border: 1px solid #5e4f66; display: flex; align-items: center; padding-left: 14px; font-size: 17px; letter-spacing: -.4px; color: #dcd3de; }
.search span { margin-left: 12px; }
.search .art { margin: 0 7px 0 auto; }
.apps { display: flex; margin-left: 2px; }
.app { width: 55px; height: 59px; display: flex; align-items: center; justify-content: center; position: relative; }
.run::after { content: ""; position: absolute; left: 24px; bottom: 5px; width: 8px; height: 4px; border-radius: 2px; background: #a9a0a2; }
.run.active { background: linear-gradient(#ffffff14, #ffffff14) no-repeat 3px 4px / 49px 50px; }
.run.active svg { margin: -4px 0 0 6px; }
.run.active::after { left: 18px; width: 20px; background: #ff5ac8; }
.tray { display: flex; align-items: center; margin-left: auto; padding-right: 27px; }
.t2 { margin-left: 22px; }
.t3 { margin-left: 20px; }
.t4 { margin-left: 20px; }
.t5 { margin-left: 21px; }
.t6 { margin-left: 10px; }
.t7 { margin-left: 10px; margin-top: -3px; }
.clock { width: 89px; text-align: right; font-size: 15px; line-height: 20px; margin-top: -1px; }
.clock span { display: block; }
.tm { letter-spacing: -.38px; }
.dt { letter-spacing: -.26px; }
.bell { margin-left: 11px; }
```
